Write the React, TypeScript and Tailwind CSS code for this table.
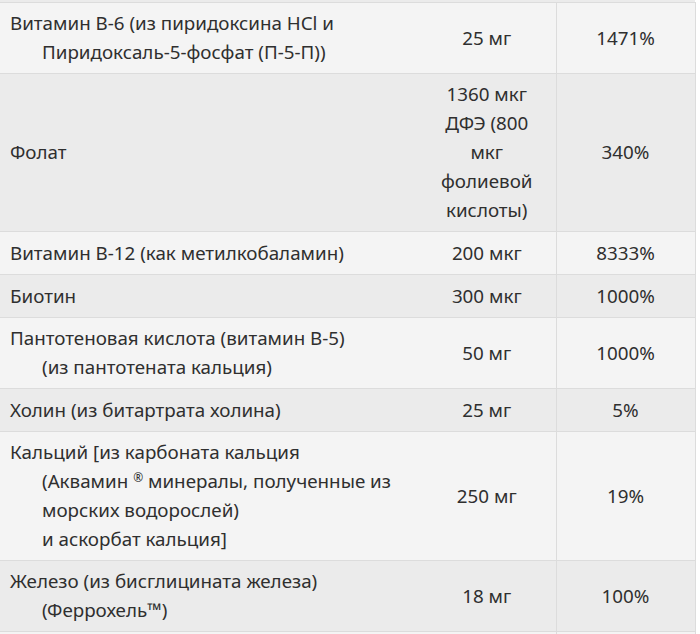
import React from "react";

type Row = {
  name: React.ReactNode;
  amount: React.ReactNode;
  dv: string;
  h?: string;
};

const rows: Row[] = [
  {
    name: (
      <>
        Витамин В-6 (из пиридоксина HCl и
        <br />
        Пиридоксаль-5-фосфат (П-5-П))
      </>
    ),
    amount: "25 мг",
    dv: "1471%",
  },
  {
    name: "Фолат",
    amount: (
      <>
        1360 мкг
        <br />
        ДФЭ (800
        <br />
        мкг
        <br />
        фолиевой
        <br />
        кислоты)
      </>
    ),
    dv: "340%",
  },
  { name: "Витамин В-12 (как метилкобаламин)", amount: "200 мкг", dv: "8333%", h: "h-[43px]" },
  { name: "Биотин", amount: "300 мкг", dv: "1000%", h: "h-[43px]" },
  {
    name: (
      <>
        Пантотеновая кислота (витамин В-5)
        <br />
        (из пантотената кальция)
      </>
    ),
    amount: "50 мг",
    dv: "1000%",
  },
  { name: "Холин (из битартрата холина)", amount: "25 мг", dv: "5%", h: "h-[43px]" },
  {
    name: (
      <>
        Кальций [из карбоната кальция
        <br />
        (Аквамин <sup className="text-[12px] leading-none">®</sup> минералы, полученные из
        <br />
        морских водорослей)
        <br />
        и аскорбат кальция]
      </>
    ),
    amount: "250 мг",
    dv: "19%",
  },
  {
    name: (
      <>
        Железо (из бисглицината железа)
        <br />
        (Феррохель™)
      </>
    ),
    amount: "18 мг",
    dv: "100%",
  },
  { name: "", amount: "", dv: "", h: "h-[43px]" },
];

export default function App() {
  return (
    <div
      className="w-[700px] h-[634px] overflow-hidden bg-white text-[#2f2f2f]"
      style={{ fontFamily: '"Noto Sans", "Open Sans", sans-serif' }}
    >
      <div className="w-[695px] h-[2px] bg-[#ebebeb]" />
      <table className="w-[695px] border-collapse table-fixed text-[18.8px] leading-[29px]">
        <colgroup>
          <col className="w-[418px]" />
          <col className="w-[138px]" />
          <col className="w-[139px]" />
        </colgroup>
        <tbody>
          {rows.map((r, i) => (
            <tr
              key={i}
              className={`${i % 2 === 0 ? "bg-[#f4f4f4]" : "bg-[#ebebeb]"} border-y border-[#dcdcdc] ${r.h ?? ""}`}
            >
              <td className="pl-[42px] pr-2 py-[6px] -indent-[32px] align-middle">
                {r.name}
              </td>
              <td className="px-2 py-[6px] text-center align-middle">{r.amount}</td>
              <td className="px-2 py-[6px] text-center align-middle border-l border-r border-[#dcdcdc]">
                {r.dv}
              </td>
            </tr>
          ))}
        </tbody>
      </table>
    </div>
  );
}
